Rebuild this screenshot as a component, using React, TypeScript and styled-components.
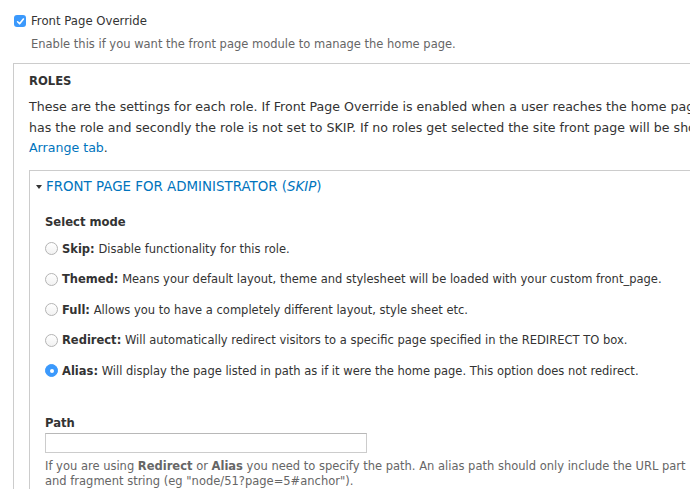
import React from "react";
import styled, { createGlobalStyle } from "styled-components";

const GlobalStyle = createGlobalStyle`
  html, body {
    margin: 0;
    padding: 0;
    background: #fff;
    overflow: hidden;
  }
  body {
    font-family: "DejaVu Sans", "Liberation Sans", sans-serif;
    font-size: 12.6px;
    color: #333;
  }
`;

const Page = styled.div`
  width: 760px;
  padding: 13px 0 0 13px;
`;

const CheckRow = styled.label`
  display: flex;
  align-items: center;
  gap: 5px;
  padding-left: 1px;
  font-size: 11.7px;
  line-height: 16px;
`;

const CheckBox = styled.span`
  width: 12px;
  height: 12px;
  border-radius: 3px;
  background: #3b99fc;
  display: flex;
  align-items: center;
  justify-content: center;
`;

const Description = styled.div<{ indent?: number; top: number }>`
  font-size: 11.5px;
  color: #666;
  line-height: 15px;
  margin-top: ${({ top }) => top}px;
  padding-left: ${({ indent }) => indent ?? 0}px;
  white-space: nowrap;
`;

const Fieldset = styled.div<{ top: number; pad: string }>`
  margin-top: ${({ top }) => top}px;
  border: 1px solid #ccc;
  border-right: none;
  border-bottom: none;
  padding: ${({ pad }) => pad};
`;

const SectionTitle = styled.div`
  font-weight: bold;
  font-size: 11.6px;
  text-transform: uppercase;
  line-height: 18px;
`;

const Paragraph = styled.p`
  margin: 7px 0 0;
  line-height: 20.5px;
  white-space: nowrap;
`;

const Link = styled.a`
  color: #0074bd;
  text-decoration: none;
`;

const Legend = styled.div`
  display: flex;
  align-items: center;
  gap: 4px;
  margin-left: -9px;
  color: #0074bd;
  font-size: 13.4px;
  text-transform: uppercase;
  line-height: 18px;
`;

const Caret = styled.span`
  width: 0;
  height: 0;
  border-left: 3px solid transparent;
  border-right: 3px solid transparent;
  border-top: 4px solid #333;
`;

const FieldLabel = styled.div<{ top: number }>`
  font-weight: bold;
  font-size: 11.6px;
  line-height: 18px;
  margin-top: ${({ top }) => top}px;
`;

const RadioList = styled.div`
  display: flex;
  flex-direction: column;
  gap: 12.5px;
  margin-top: 9px;
`;

const RadioRow = styled.label`
  display: flex;
  align-items: center;
  gap: 4px;
  font-size: 11.5px;
  line-height: 18px;
  white-space: nowrap;
`;

const Radio = styled.span<{ checked?: boolean }>`
  width: 13px;
  height: 13px;
  box-sizing: border-box;
  border-radius: 50%;
  border: 1px solid ${({ checked }) => (checked ? "#3b99fc" : "#b4b4b4")};
  background: ${({ checked }) =>
    checked ? "#3b99fc" : "linear-gradient(#fff, #f2f2f2)"};
  display: flex;
  align-items: center;
  justify-content: center;
  &::after {
    content: "";
    width: 4px;
    height: 4px;
    border-radius: 50%;
    background: #fff;
    display: ${({ checked }) => (checked ? "block" : "none")};
  }
`;

const TextInput = styled.input`
  display: block;
  box-sizing: border-box;
  width: 322px;
  height: 20px;
  margin: 1px 0 0;
  border: 1px solid #ccc;
  border-top-color: #b8b8b8;
  padding: 2px 4px;
  font: inherit;
`;

const options = [
  { name: "Skip", text: "Disable functionality for this role." },
  {
    name: "Themed",
    text: "Means your default layout, theme and stylesheet will be loaded with your custom front_page.",
  },
  {
    name: "Full",
    text: "Allows you to have a completely different layout, style sheet etc.",
  },
  {
    name: "Redirect",
    text: "Will automatically redirect visitors to a specific page specified in the REDIRECT TO box.",
  },
  {
    name: "Alias",
    text: "Will display the page listed in path as if it were the home page. This option does not redirect.",
    checked: true,
  },
];

const App: React.FC = () => (
  <Page>
    <GlobalStyle />
    <CheckRow>
      <CheckBox>
        <svg width="9" height="9" viewBox="0 0 9 9">
          <path
            d="M1.6 4.8 L3.6 6.8 L7.4 2"
            fill="none"
            stroke="#fff"
            strokeWidth="1.6"
            strokeLinecap="round"
            strokeLinejoin="round"
          />
        </svg>
      </CheckBox>
      Front Page Override
    </CheckRow>
    <Description indent={18} top={8}>
      Enable this if you want the front page module to manage the home page.
    </Description>
    <Fieldset top={11} pad="8px 0 0 15px">
      <SectionTitle>Roles</SectionTitle>
      <Paragraph>
        These are the settings for each role. If Front Page Override is enabled
        when a user reaches the home page the site will check each role and
        <br />
        has the role and secondly the role is not set to SKIP. If no roles get
        selected the site front page will be shown as normal. To rearrange
        <br />
        <Link href="#">Arrange tab</Link>.
      </Paragraph>
      <Fieldset top={11} pad="7px 0 0 15px">
        <Legend>
          <Caret />
          <span>
            Front page for Administrator (<i>Skip</i>)
          </span>
        </Legend>
        <FieldLabel top={17}>Select mode</FieldLabel>
        <RadioList>
          {options.map((o) => (
            <RadioRow key={o.name}>
              <Radio checked={o.checked} />
              <span>
                <b>{o.name}:</b> {o.text}
              </span>
            </RadioRow>
          ))}
        </RadioList>
        <FieldLabel top={34}>Path</FieldLabel>
        <TextInput type="text" />
        <Description top={6}>
          If you are using <b>Redirect</b> or <b>Alias</b> you need to specify
          the path. An alias path should only include the URL part
          <br />
          and fragment string (eg "node/51?page=5#anchor").
        </Description>
      </Fieldset>
    </Fieldset>
  </Page>
);

export default App;
